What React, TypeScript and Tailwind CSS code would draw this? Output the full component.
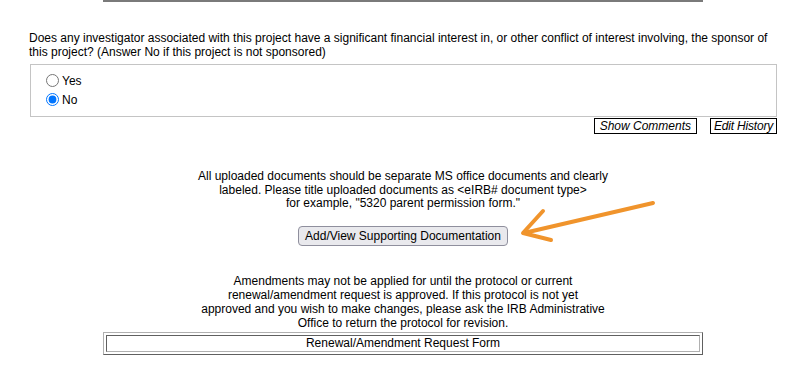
export default function App() {
  return (
    <div className="relative w-[803px] h-[367px] overflow-hidden bg-white text-black font-['Liberation_Sans',Arial,sans-serif] text-[12px] leading-[14px]">
      <div className="ml-[103px] w-[600px] h-[2px] bg-[#7a7a7a]" />

      <div className="ml-[29px] mr-[26px] mt-[29px]">
        <p>
          Does any investigator associated with this project have a significant financial interest in, or other conflict of interest involving, the sponsor of
          <br />
          this project? (Answer No if this project is not sponsored)
        </p>

        <div className="mt-[5px] ml-[1px] h-[53px] border border-[#c4c4c4] pt-[6px] pl-[15px]">
          <label className="flex h-[19px] items-center gap-[3px]">
            <input type="radio" name="coi" className="m-0 h-[13px] w-[13px]" />
            <span>Yes</span>
          </label>
          <label className="flex h-[19px] items-center gap-[3px]">
            <input type="radio" name="coi" defaultChecked className="m-0 h-[13px] w-[13px]" />
            <span>No</span>
          </label>
        </div>

        <div className="flex justify-end gap-[13px] mt-[1px]">
          <button className="h-[16px] border border-black px-[5px] italic leading-[14px] text-[12px]">
            Show Comments
          </button>
          <button className="h-[16px] border border-black px-[3px] italic leading-[14px] text-[12px] tracking-[-0.2px]">
            Edit History
          </button>
        </div>
      </div>

      <div className="mt-[36px] text-center leading-[13.5px] pl-[3px]">
        <p>All uploaded documents should be separate MS office documents and clearly</p>
        <p>labeled. Please title uploaded documents as &lt;eIRB# document type&gt;</p>
        <p>for example, "5320 parent permission form."</p>
      </div>

      <div className="mt-[15px] flex justify-center pl-[3px]">
        <button className="h-[20px] rounded-[4px] border border-[#8f8f9d] bg-[#e9e9ed] px-[6px] text-[12px] leading-[16px]">
          Add/View Supporting Documentation
        </button>
      </div>

      <svg className="absolute left-0 top-0" width="803" height="367" viewBox="0 0 803 367">
        <g stroke="#f0942c" strokeWidth="4" strokeLinecap="round" strokeLinejoin="round" fill="none">
          <line x1="653" y1="203" x2="524" y2="233" />
          <polyline points="543,211 523,233 551,240" />
        </g>
      </svg>

      <div className="mt-[28px] text-center pl-[3px]">
        <p>Amendments may not be applied for until the protocol or current</p>
        <p>renewal/amendment request is approved. If this protocol is not yet</p>
        <p>approved and you wish to make changes, please ask the IRB Administrative</p>
        <p>Office to return the protocol for revision.</p>
      </div>

      <div className="ml-[103px] mt-[2px] w-[600px] h-[23px] border border-t-[#b0b0b0] border-l-[#b0b0b0] border-r-[#606060] border-b-[#606060] p-[2px]">
        <div className="h-full border border-t-[#606060] border-l-[#606060] border-r-[#b0b0b0] border-b-[#b0b0b0] text-center leading-[15px]">
          Renewal/Amendment Request Form
        </div>
      </div>
    </div>
  )
}
